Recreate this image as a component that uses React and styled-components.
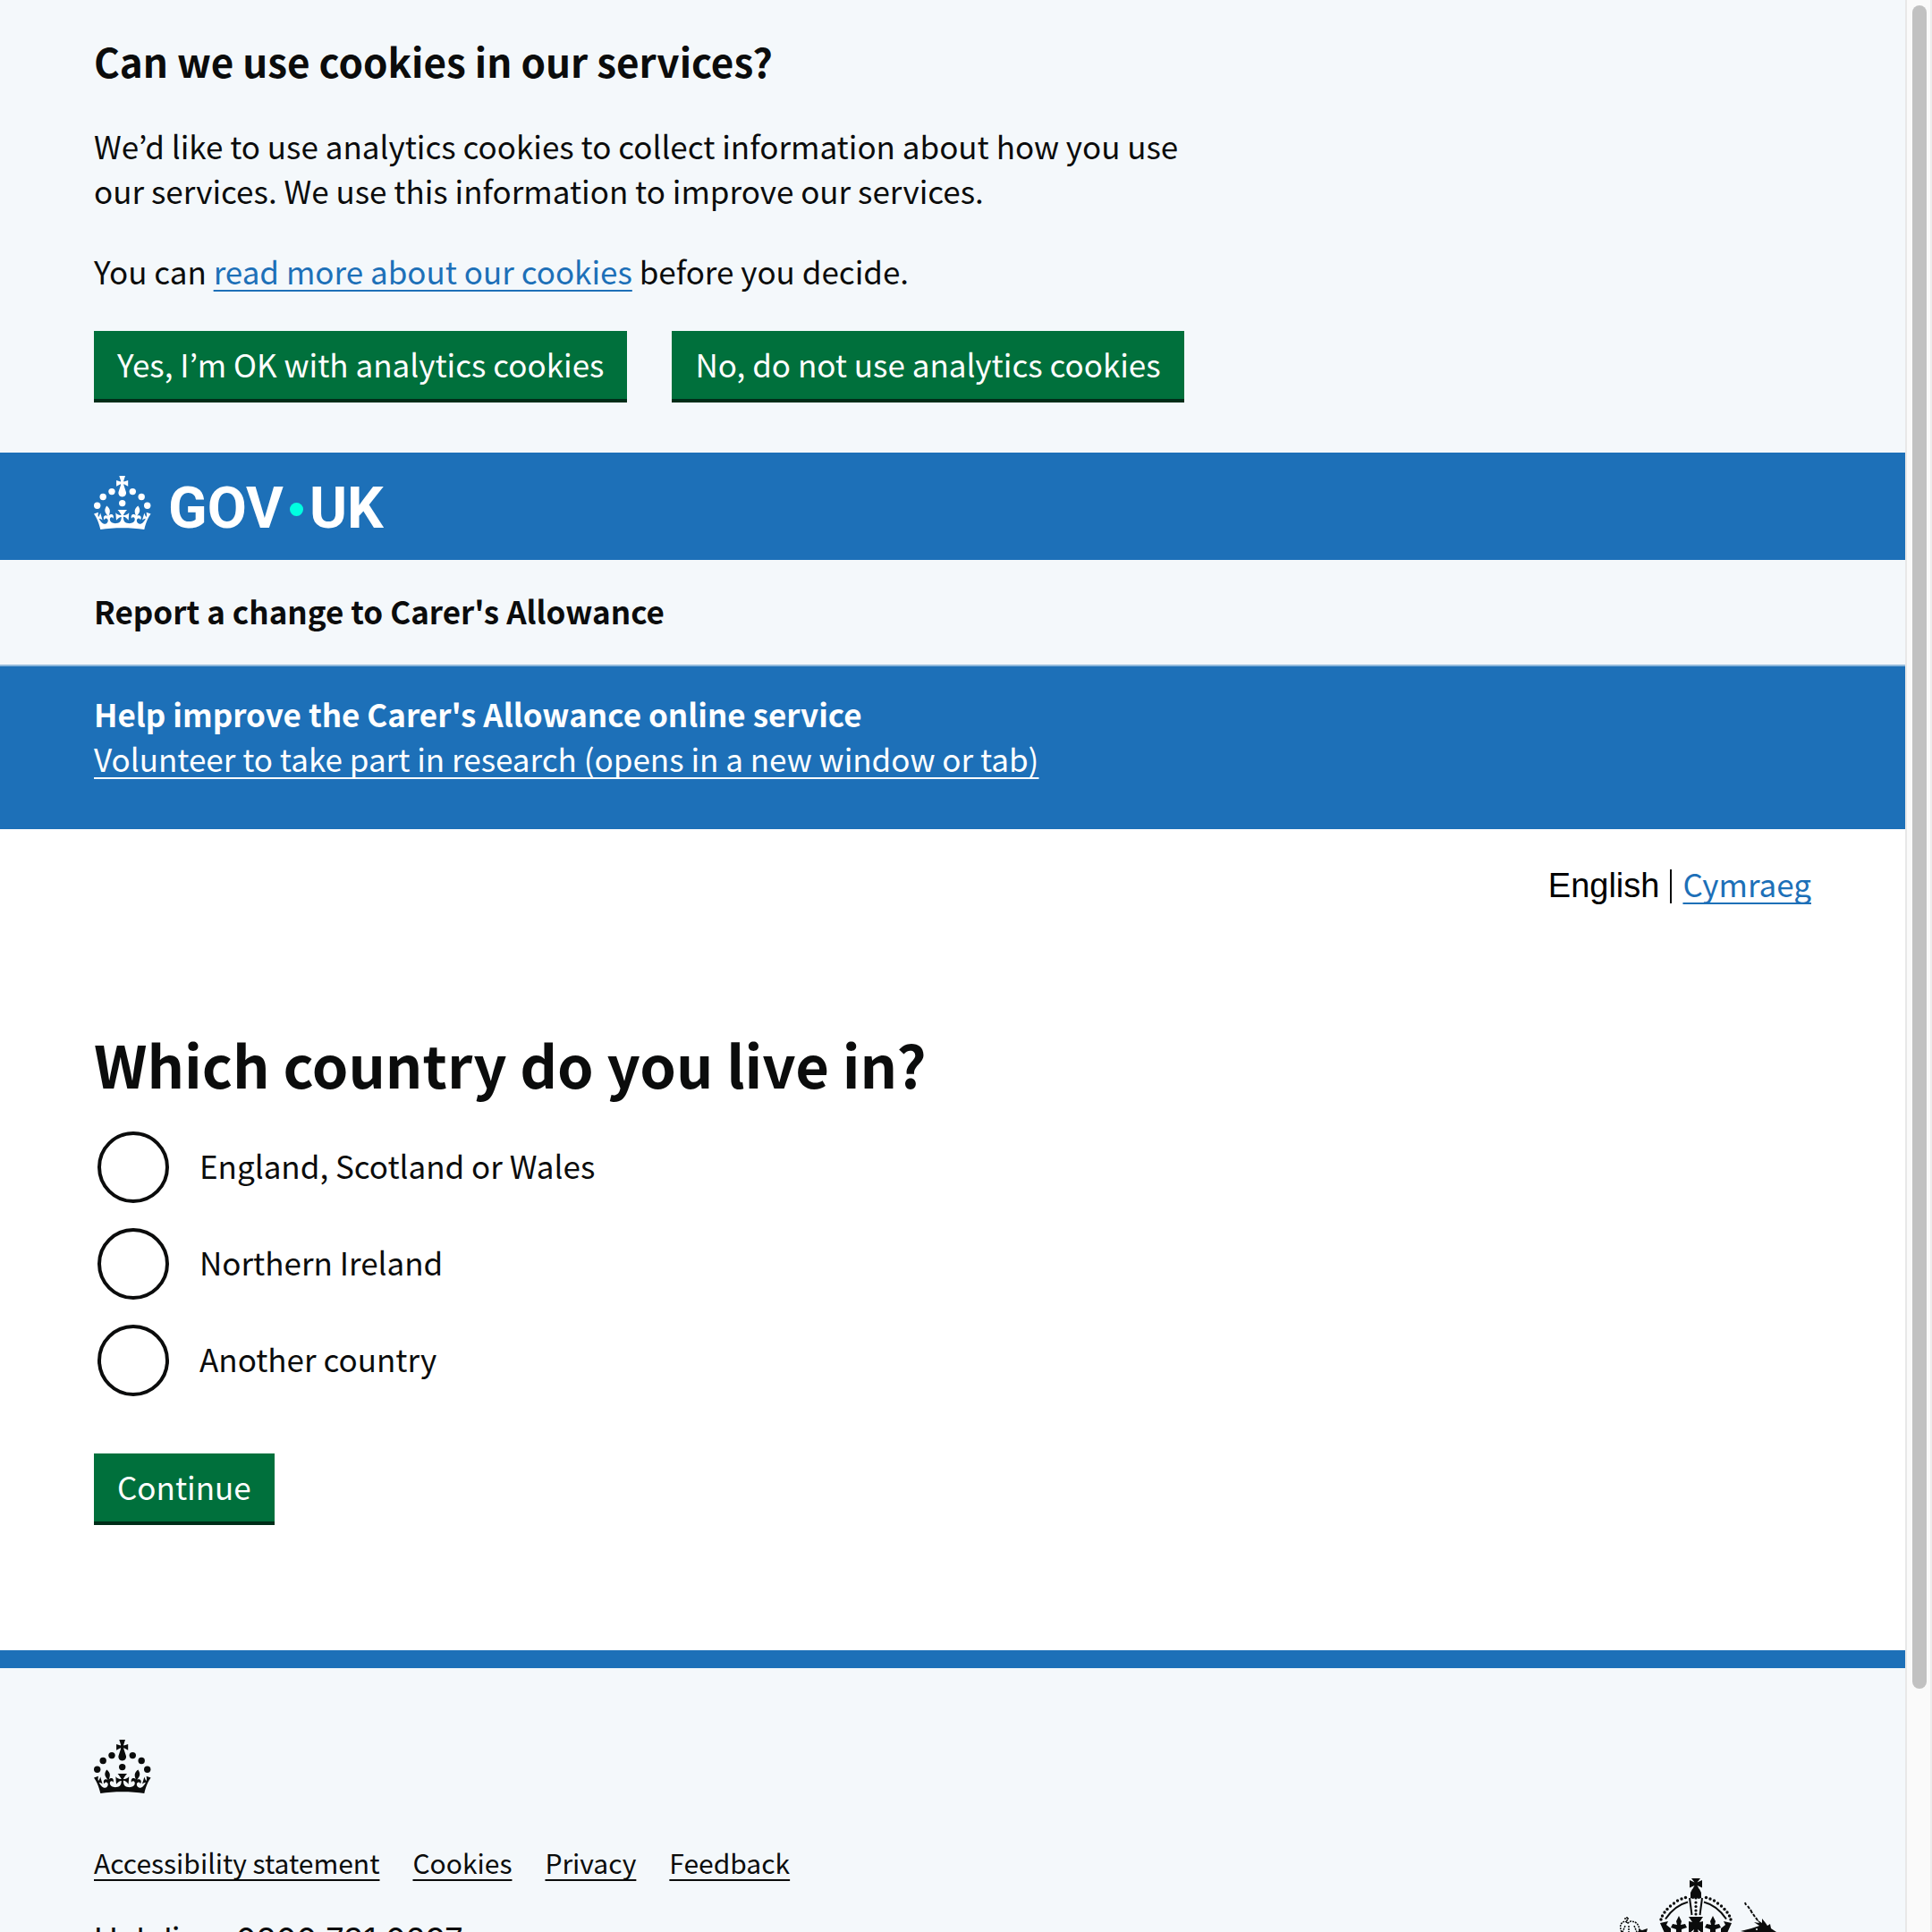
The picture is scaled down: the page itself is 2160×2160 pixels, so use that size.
import React from 'react';
import styled, { createGlobalStyle } from 'styled-components';

const ink = '#0b0c0c';
const blue = '#1d70b8';
const pale = '#f4f8fb';
const sans = '"Noto Sans CJK JP", "Noto Sans", Arial, sans-serif';

const GlobalStyle = createGlobalStyle`
  *, *::before, *::after { box-sizing: border-box; }
  body {
    margin: 0;
    background: #ffffff;
    color: ${ink};
    font-family: ${sans};
    font-size: 35px;
    line-height: 50px;
  }
  h1, h2, p, ul, fieldset { margin: 0; padding: 0; border: 0; }
`;

const Frame = styled.div`
  display: flex;
  height: 100vh;
  overflow: hidden;
`;

const Page = styled.div`
  flex: 1;
  min-width: 0;
  overflow: hidden;
`;

const ScrollTrack = styled.div`
  width: 30px;
  padding: 6px 4px 6px 6px;
  background: #fafafa;
  border-left: 2px solid #e8e8e8;
  border-right: 2px solid #ededed;
`;

const ScrollThumb = styled.div`
  height: 87.6%;
  border-radius: 8px;
  background: #c1c1c1;
`;

const Container = styled.div`
  margin: 0 105px;
`;

const TextLink = styled.a`
  color: ${(p) => p.$color || blue};
  text-decoration: underline;
  text-decoration-thickness: 2px;
  text-decoration-skip-ink: none;
  text-underline-offset: 6px;
`;

const CookieBanner = styled.section`
  padding: 38px 0 56px;
  background: ${pale};
`;

const BannerHeading = styled.h2`
  margin-bottom: 40px;
  font-size: 44px;
  line-height: 60px;
`;

const BannerCopy = styled.div`
  display: grid;
  gap: 40px;
  max-width: 1260px;
  margin-bottom: 42px;
`;

const ButtonGroup = styled.div`
  display: flex;
  flex-wrap: wrap;
  gap: 20px 50px;
`;

const Button = styled.button`
  height: 80px;
  padding: 0 26px 6px;
  border: 0;
  border-radius: 0;
  background: #00703c;
  box-shadow: inset 0 -4px 0 #002d18;
  color: #ffffff;
  font: inherit;
  cursor: pointer;
`;

const Header = styled.header`
  padding: 26px 0 34px;
  background: ${blue};
`;

const HomeLink = styled.a`
  display: inline-flex;
  align-items: center;
  height: 60px;
  color: #ffffff;
  text-decoration: none;
  vertical-align: top;
`;

const CrownSvg = styled.svg`
  display: block;
  width: 64px;
  height: 60px;
  fill: currentColor;
`;

const Wordmark = styled.span`
  display: flex;
  align-items: center;
  gap: 7px;
  margin: 14px 0 0 19px;
  font: 700 64px/60px Roboto, Arial, sans-serif;
`;

const Dot = styled.span`
  width: 15px;
  height: 15px;
  border-radius: 50%;
  background: #00ffe0;
`;

const ServiceNav = styled.section`
  padding: 32px 0 35px;
  border-bottom: 2px solid #8eb8dc;
  background: ${pale};
  font-weight: 700;
`;

const ResearchBanner = styled.section`
  padding: 28px 0 54px;
  background: ${blue};
  color: #ffffff;
`;

const BannerTitle = styled.h2`
  font-size: 35px;
  line-height: 50px;
`;

const LanguageNav = styled.nav`
  display: flex;
  justify-content: flex-end;
  align-items: center;
  padding: 34px 0 134px;
`;

const CurrentLanguage = styled.span`
  padding: 4px 12px 0 0;
  color: #000000;
  font-family: "Liberation Sans", Arial, sans-serif;
  font-size: 38px;
`;

const LanguageRule = styled.span`
  width: 2px;
  height: 38px;
  margin: 6px 12px 0 0;
  background: ${ink};
`;

const Question = styled.fieldset`
  min-width: 0;
`;

const QuestionLegend = styled.legend`
  padding: 0;
  margin-bottom: 36px;
`;

const QuestionHeading = styled.h1`
  font-size: 65px;
  line-height: 80px;
`;

const RadioList = styled.div`
  display: grid;
  gap: 28px;
  margin: 0 0 64px 4px;
`;

const RadioRow = styled.div`
  display: flex;
  align-items: center;
`;

const Radio = styled.input`
  appearance: none;
  flex: none;
  width: 80px;
  height: 80px;
  margin: 0;
  border: 4px solid ${ink};
  border-radius: 50%;
  background: #ffffff;
  &:checked { box-shadow: inset 0 0 0 16px #ffffff, inset 0 0 0 40px ${ink}; }
`;

const RadioLabel = styled.label`
  padding: 0 30px 4px 34px;
`;

const Footer = styled.footer`
  margin-top: 140px;
  padding: 80px 0 60px;
  border-top: 20px solid ${blue};
  background: ${pale};
`;

const FooterMain = styled.div`
  display: flex;
  align-items: flex-end;
  justify-content: space-between;
  margin-top: 57px;
`;

const FooterLinks = styled.ul`
  display: flex;
  flex-wrap: wrap;
  gap: 10px 37px;
  margin-bottom: 41px;
  list-style: none;
  font-size: 30px;
  line-height: 40px;
`;

const Helpline = styled.p`
  font-family: Inter, Arial, sans-serif;
  font-size: 36px;
`;

const CrestSvg = styled.svg`
  display: block;
  width: 250px;
  height: 93px;
  margin-right: 4px;
`;

function Crown() {
  return (
    <CrownSvg viewBox="0 0 64 60" aria-hidden="true">
      <circle cx="20" cy="17.6" r="3.7" />
      <circle cx="10.2" cy="23.5" r="3.7" />
      <circle cx="3.7" cy="33.2" r="3.7" />
      <circle cx="31.7" cy="30.6" r="3.7" />
      <circle cx="43.3" cy="17.6" r="3.7" />
      <circle cx="53.2" cy="23.5" r="3.7" />
      <circle cx="59.7" cy="33.2" r="3.7" />
      <path d="M33.1,9.8c.2-.1.3-.3.5-.5l4.6,2.4v-6.8l-4.6,1.5c-.1-.2-.3-.3-.5-.5l1.9-5.9h-6.7l1.9,5.9c-.2.1-.3.3-.5.5l-4.6-1.5v6.8l4.6-2.4c.1.2.3.3.5.5l-2.6,8c-.9,2.8,1.2,5.7,4.1,5.7h0c3,0,5.1-2.9,4.1-5.7l-2.6-8ZM37,37.9s-3.4,3.8-4.1,6.1c2.2,0,4.2-.5,6.4-2.8l-.7,8.5c-2-2.8-4.4-4.1-5.7-3.8.1,3.1.5,6.7,5.8,7.2,3.7.3,6.7-1.5,7-3.8.4-2.6-2-4.3-3.7-1.6-1.4-4.5,2.4-6.1,4.9-3.2-1.9-4.5-1.8-7.7,2.4-10.9,3,4,2.6,7.3-1.2,11.1,2.4-1.3,6.2,0,4,4.6-1.2-2.8-3.7-2.2-4.2.2-.3,1.7.7,3.7,3,4.2,1.9.3,4.7-.9,7-5.9-1.3,0-2.4.7-3.9,1.7l2.4-8c.6,2.3,1.4,3.7,2.2,4.5.6-1.6.5-2.8,0-5.3l5,1.8c-2.6,3.6-5.2,8.7-7.3,17.5-7.4-1.1-15.7-1.7-24.5-1.7h0c-8.8,0-17.1.6-24.5,1.7-2.1-8.9-4.7-13.9-7.3-17.5l5-1.8c-.5,2.5-.6,3.7,0,5.3.8-.8,1.6-2.3,2.2-4.5l2.4,8c-1.5-1-2.6-1.7-3.9-1.7,2.3,5,5.2,6.2,7,5.9,2.3-.4,3.3-2.4,3-4.2-.5-2.4-3-3.1-4.2-.2-2.2-4.6,1.6-6,4-4.6-3.7-3.7-4.2-7.1-1.2-11.1,4.2,3.2,4.3,6.4,2.4,10.9,2.5-2.8,6.3-1.3,4.9,3.2-1.8-2.7-4.1-1-3.7,1.6.3,2.3,3.3,4.1,7,3.8,5.4-.5,5.7-4.2,5.8-7.2-1.3-.2-3.7,1-5.7,3.8l-.7-8.5c2.2,2.3,4.2,2.7,6.4,2.8-.7-2.3-4.1-6.1-4.1-6.1h10.6,0Z" />
    </CrownSvg>
  );
}

const pearls = [
  [113.5, 21.5], [109, 23], [104.5, 25], [100.5, 28], [96.5, 31], [93, 34.5], [90, 38], [87.5, 42], [86, 46],
];

function Crest() {
  return (
    <CrestSvg viewBox="0 0 250 93" aria-hidden="true" fill={ink}>
      <path d="M120 0h10l-3.500 4.500 5.500-2.500v8.500l-5.500-2.500 2.500 4.500h-8l2.500-4.500-5.500 2.500v-8.500l5.500 2.500z" />
      <path d="M121 12h8l2 4v6l-3 1-3-2-3 2-3-1v-6z" />
      {pearls.map(([x, y]) => (
        <React.Fragment key={x}>
          <circle cx={x} cy={y} r="1.700" />
          <circle cx={250 - x} cy={y} r="1.700" />
        </React.Fragment>
      ))}
      <g fill="none" stroke={ink} strokeWidth="2">
        <path d="M116 26.500q-15 4-25 19M134 26.500q15 4 25 19M118 22l2.500 19M132 22l-2.500 19" />
      </g>
      {[22, 27, 31.5, 36, 40].map((y) => (
        <circle key={y} cx="125" cy={y} r="1.600" />
      ))}
      <path d="M117 43h16l-4 6 4-1v14l-6-5 3 12h-10l3-12-6 5v-14l4 1z" />
      <path d="M106 42l3 6-1 4 5-1 2 4-6 2v7h-6v-7l-6-2 2-4 5 1-1-4z" />
      <path d="M144 42l-3 6 1 4-5-1-2 4 6 2v7h6v-7l6-2-2-4-5 1 1-4z" />
      <path d="M85 50l9-2-2 4 5 4v14h-3zM165 50l-9-2 2 4-5 4v14h3z" />
      <path d="M94 62h62v8H94z" />
      <g fill="none" stroke={ink} strokeWidth="1.500" strokeDasharray="2 1">
        <path d="M42 60q-4-10 4-12l3 2 3-2q10 0 10 12M48 43v7M45 45h6M46 53l-3 7M56 53l3 7M50 53v7" />
      </g>
      <path d="M62 57l3 1 6-2-1 4H60z" />
      <path d="M180 27l1 3M183 31l2 3M186 35l2 4M189 40l2 3M192 44l2 3" fill="none" stroke={ink} strokeWidth="2" />
      <path d="M175 59l12-3 6-2 3-1-6-4 6 1-3-4 6 4v-5l4 5 2 3 3-2 1 5 6 4-4 1 2 4h-20l-3-3z" />
      <circle cx="193" cy="57" r="1" fill={pale} />
    </CrestSvg>
  );
}

const countries = [
  ['england', 'England, Scotland or Wales'],
  ['northern-ireland', 'Northern Ireland'],
  ['another', 'Another country'],
];

const footerLinks = ['Accessibility statement', 'Cookies', 'Privacy', 'Feedback'];

export default function App() {
  return (
    <>
      <GlobalStyle />
      <Frame>
        <Page>
          <CookieBanner>
            <Container>
              <BannerHeading>Can we use cookies in our services?</BannerHeading>
              <BannerCopy>
                <p>
                  We’d like to use analytics cookies to collect information about how you use our
                  services. We use this information to improve our services.
                </p>
                <p>
                  You can <TextLink href="#cookies">read more about our cookies</TextLink> before
                  you decide.
                </p>
              </BannerCopy>
              <ButtonGroup>
                <Button type="button">Yes, I’m OK with analytics cookies</Button>
                <Button type="button">No, do not use analytics cookies</Button>
              </ButtonGroup>
            </Container>
          </CookieBanner>

          <Header>
            <Container>
              <HomeLink href="#home">
                <Crown />
                <Wordmark>
                  <span>GOV</span>
                  <Dot />
                  <span>UK</span>
                </Wordmark>
              </HomeLink>
            </Container>
          </Header>

          <ServiceNav>
            <Container>Report a change to Carer's Allowance</Container>
          </ServiceNav>

          <ResearchBanner>
            <Container>
              <BannerTitle>Help improve the Carer's Allowance online service</BannerTitle>
              <TextLink href="#research" $color="#ffffff">
                Volunteer to take part in research (opens in a new window or tab)
              </TextLink>
            </Container>
          </ResearchBanner>

          <Container>
            <LanguageNav aria-label="Language">
              <CurrentLanguage>English</CurrentLanguage>
              <LanguageRule />
              <TextLink href="#cymraeg" lang="cy">Cymraeg</TextLink>
            </LanguageNav>
            <form>
              <Question>
                <QuestionLegend>
                  <QuestionHeading>Which country do you live in?</QuestionHeading>
                </QuestionLegend>
                <RadioList>
                  {countries.map(([id, label]) => (
                    <RadioRow key={id}>
                      <Radio type="radio" name="country" id={id} value={id} />
                      <RadioLabel htmlFor={id}>{label}</RadioLabel>
                    </RadioRow>
                  ))}
                </RadioList>
              </Question>
              <Button type="button">Continue</Button>
            </form>
          </Container>

          <Footer>
            <Container>
              <Crown />
              <FooterMain>
                <div>
                  <FooterLinks>
                    {footerLinks.map((label) => (
                      <li key={label}>
                        <TextLink href="#footer" $color={ink}>{label}</TextLink>
                      </li>
                    ))}
                  </FooterLinks>
                  <Helpline>Helpline: 0800 731 0297</Helpline>
                </div>
                <Crest />
              </FooterMain>
            </Container>
          </Footer>
        </Page>
        <ScrollTrack aria-hidden="true">
          <ScrollThumb />
        </ScrollTrack>
      </Frame>
    </>
  );
}
